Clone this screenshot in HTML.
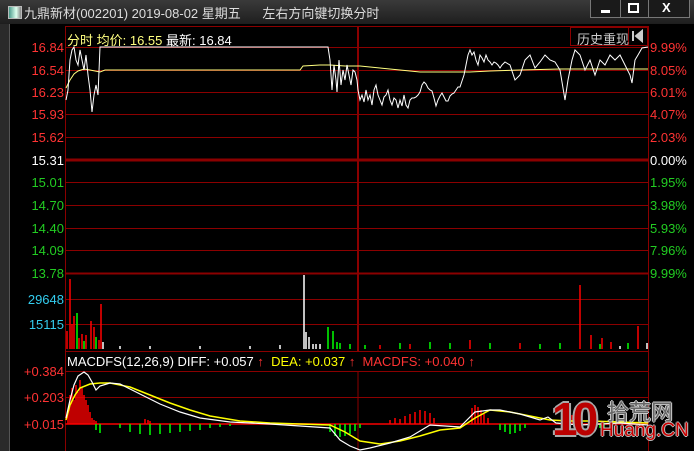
<!DOCTYPE html>
<html><head><meta charset="utf-8"><style>
html,body{margin:0;padding:0;background:#000;width:694px;height:451px;overflow:hidden;font-family:"Liberation Sans","Noto Sans CJK SC",sans-serif}
.t{position:absolute;font-size:13px;white-space:nowrap}
</style></head><body>
<div style="position:absolute;left:0;top:0;width:694px;height:24px;background:linear-gradient(#3a3a3a,#1e1e1e)"></div>
<div style="position:absolute;left:0;top:24px;width:9px;height:427px;background:#2a2a2a;border-right:1px solid #555"></div>
<div style="position:absolute;left:8px;top:6px;width:12px;height:11px;background:linear-gradient(90deg,#4a9a8a,#dfe 60%,#888);border:1px solid #bbb"></div>
<div class="t" style="left:24px;top:3px;color:#ddd;font-size:13px">九鼎新材(002201) 2019-08-02 星期五&nbsp;&nbsp;&nbsp;&nbsp;&nbsp;&nbsp;左右方向键切换分时</div>
<div style="position:absolute;left:590px;top:0;width:98px;height:17px;border:1px solid #777;border-top:0;background:#1a1a1a"></div>
<div style="position:absolute;left:620px;top:0;width:1px;height:17px;background:#777"></div>
<div style="position:absolute;left:648px;top:0;width:1px;height:17px;background:#777"></div>
<div style="position:absolute;left:601px;top:10px;width:9px;height:3px;background:#fff"></div>
<div style="position:absolute;left:628px;top:3px;width:7px;height:6px;border:2px solid #fff"></div>
<div class="t" style="left:662px;top:0px;color:#fff;font-weight:bold;font-size:13px">X</div>
<svg width="694" height="451" style="position:absolute;left:0;top:0">
<g stroke="#8b0000" stroke-width="1">
<rect x="65.5" y="26.5" width="583" height="430" fill="none" stroke="#8b0000"/>
<line x1="65" y1="47.5" x2="648" y2="47.5"/>
<line x1="65" y1="70.5" x2="648" y2="70.5"/>
<line x1="65" y1="92.5" x2="648" y2="92.5"/>
<line x1="65" y1="114.5" x2="648" y2="114.5"/>
<line x1="65" y1="137.5" x2="648" y2="137.5"/>
<line x1="65" y1="160" x2="648" y2="160" stroke-width="3"/>
<line x1="65" y1="182.5" x2="648" y2="182.5"/>
<line x1="65" y1="205.5" x2="648" y2="205.5"/>
<line x1="65" y1="228.5" x2="648" y2="228.5"/>
<line x1="65" y1="250.5" x2="648" y2="250.5"/>
<line x1="65" y1="273.5" x2="648" y2="273.5" stroke-width="2"/>
<line x1="65" y1="299.5" x2="648" y2="299.5"/>
<line x1="65" y1="324.5" x2="648" y2="324.5"/>
<line x1="65" y1="351.5" x2="648" y2="351.5"/>
<line x1="65" y1="371.5" x2="648" y2="371.5"/>
<line x1="65" y1="397.5" x2="648" y2="397.5"/>
<line x1="65" y1="424" x2="648" y2="424" stroke-width="2" stroke="#b00"/>
<line x1="358" y1="26" x2="358" y2="351" stroke-width="2"/>
<line x1="358" y1="371" x2="358" y2="451"/>
</g>
<rect x="570.5" y="27.5" width="58" height="18" fill="#000" stroke="#8b0000"/>
<rect x="628.5" y="27.5" width="19" height="18" fill="#000" stroke="#8b0000"/>
<path d="M633 31v10M642 31l-6 5 6 5z" stroke="#ccc" fill="#ccc" stroke-width="2"/>
<polyline fill="none" stroke="#ffff80" stroke-width="1" points="66,88 70,80 74,74 78,71 84,69 90,70 95,71 100,72 105,70 120,70 200,70 300,70 303,66 320,65 330,65 345,66 360,66 380,68 400,70 420,72 450,72 470,72 490,71 520,70 560,69 600,69 648,69"/>
<polyline fill="none" stroke="#fff" stroke-width="1" points="66,100 68,90 70,60 72,50 74,47 76,60 78,65 80,50 82,60 84,70 86,55 88,75 90,90 92,112 94,95 96,85 98,95 100,47 328,47 330,60 332,90 334,65 336,80 337,92 339,60 341,85 343,70 345,80 347,65 349,75 351,85 353,70 355,72 357,80 358,90 360,100 362,95 364,102 366,90 368,100 370,95 372,105 374,90 376,85 378,95 380,100 382,105 384,97 386,95 388,90 390,100 392,105 394,98 396,100 398,108 400,100 402,106 404,95 406,105 408,108 410,100 412,98 414,98 416,97 418,95 420,92 422,85 424,82 426,84 428,88 430,90 432,91 434,98 436,106 438,100 440,96 442,93 444,97 446,101 448,101 450,96 452,94 454,93 456,90 458,87 460,87 462,81 464,75 466,65 468,55 470,50 472,55 474,52 476,60 478,65 480,55 482,58 484,62 486,55 488,60 490,62 492,65 494,62 496,63 498,65 500,68 502,65 505,62 510,65 515,80 520,75 525,60 530,55 535,68 540,62 545,55 550,60 555,62 560,70 565,100 568,80 572,60 575,50 580,55 585,70 590,60 595,75 600,60 605,65 610,55 615,60 620,55 625,65 630,75 632,83 635,60 638,55 642,48 648,47"/>
<g stroke-width="1.5">
<path stroke="#f00" d="M67 349V331M70 349V279M72 349V324M74 349V316M79 349V338M82 349V334M86 349V335M91 349V321M94 349V327M99 349V340M101 349V304M580 349V285M591 349V335M602 349V338M638 349V326M611 349V342M520 349V343M470 349V340M410 349V344M380 349V345"/>
<path stroke="#0f0" d="M77 349V313M84 349V341M96 349V337M328 349V327M333 349V331M337 349V342M340 349V343M350 349V344M365 349V345M400 349V343M430 349V342M450 349V343M490 349V343M540 349V344M560 349V343M600 349V344M628 349V343"/>
<path stroke="#fff" d="M103 349V342M304 349V275M306 349V332M309 349V337M313 349V344M120 349V346M150 349V346M200 349V346M250 349V346M280 349V345M320 349V344M316 349V344M620 349V346M647 349V343"/>
</g>
<g stroke-width="1.5">
<path stroke="#f00" d="M68 424V410M70 424V395M72 424V388M74 424V400M76 424V385M78 424V392M80 424V380M82 424V388M84 424V395M86 424V400M88 424V405M90 424V412M92 424V418M94 424V420M96 424V421M145 424V419M148 424V420M150 424V421M390 424V420M395 424V418M400 424V419M405 424V416M410 424V414M415 424V412M420 424V410M425 424V411M430 424V413M434 424V418M472 424V408M475 424V405M478 424V407M481 424V410M484 424V414M488 424V418M568 424V418M572 424V415M576 424V420M580 424V422"/>
<path stroke="#0f0" d="M96 424V430M100 424V433M120 424V428M130 424V432M140 424V434M150 424V435M160 424V434M170 424V433M180 424V432M190 424V431M200 424V430M210 424V428M220 424V427M230 424V426M330 424V432M335 424V436M340 424V437M345 424V436M350 424V434M355 424V431M360 424V428M500 424V430M505 424V432M510 424V434M515 424V433M520 424V431M525 424V428M600 424V428M604 424V429"/>
</g>
<polyline fill="none" stroke="#ff0" stroke-width="1.5" points="66,420 70,405 75,395 80,388 90,384 100,383 110,383 130,387 150,395 170,403 190,410 210,416 240,421 270,423 300,424 330,425 345,432 360,441 380,444 400,441 420,436 440,430 460,428 475,418 490,410 510,412 530,416 550,420 570,421 590,421 620,422 648,423"/>
<polyline fill="none" stroke="#fff" stroke-width="1.2" points="66,418 70,400 74,385 78,376 84,372 88,375 92,382 96,390 100,386 110,383 120,384 140,394 160,404 180,412 200,418 230,422 270,424 330,428 340,440 350,446 360,450 370,448 390,443 410,437 430,425 460,427 475,412 490,410 500,410 520,414 540,420 548,417 556,423 580,425 620,423 648,425"/>
</svg>
<div class="t" style="left:67px;top:30px;color:#ffff80">分时 均价: <span style="color:#ffff80">16.55</span> <span style="color:#fff">最新: 16.84</span></div>
<div class="t" style="left:577px;top:29px;color:#ccc">历史重现</div>
<div class="t" style="left:0;top:40px;width:64px;text-align:right;color:#f33">16.84</div>
<div class="t" style="left:0;top:63px;width:64px;text-align:right;color:#f33">16.54</div>
<div class="t" style="left:0;top:85px;width:64px;text-align:right;color:#f33">16.23</div>
<div class="t" style="left:0;top:107px;width:64px;text-align:right;color:#f33">15.93</div>
<div class="t" style="left:0;top:130px;width:64px;text-align:right;color:#f33">15.62</div>
<div class="t" style="left:0;top:153px;width:64px;text-align:right;color:#fff">15.31</div>
<div class="t" style="left:0;top:175px;width:64px;text-align:right;color:#2c2">15.01</div>
<div class="t" style="left:0;top:198px;width:64px;text-align:right;color:#2c2">14.70</div>
<div class="t" style="left:0;top:221px;width:64px;text-align:right;color:#2c2">14.40</div>
<div class="t" style="left:0;top:243px;width:64px;text-align:right;color:#2c2">14.09</div>
<div class="t" style="left:0;top:266px;width:64px;text-align:right;color:#2c2">13.78</div>
<div class="t" style="left:0;top:292px;width:64px;text-align:right;color:#3ce">29648</div>
<div class="t" style="left:0;top:317px;width:64px;text-align:right;color:#3ce">15115</div>
<div class="t" style="left:0;top:364px;width:64px;text-align:right;color:#f33">+0.384</div>
<div class="t" style="left:0;top:390px;width:64px;text-align:right;color:#f33">+0.203</div>
<div class="t" style="left:0;top:417px;width:64px;text-align:right;color:#f33">+0.015</div>
<div class="t" style="left:650px;top:40px;color:#f33">9.99%</div>
<div class="t" style="left:650px;top:63px;color:#f33">8.05%</div>
<div class="t" style="left:650px;top:85px;color:#f33">6.01%</div>
<div class="t" style="left:650px;top:107px;color:#f33">4.07%</div>
<div class="t" style="left:650px;top:130px;color:#f33">2.03%</div>
<div class="t" style="left:650px;top:153px;color:#fff">0.00%</div>
<div class="t" style="left:650px;top:175px;color:#2c2">1.95%</div>
<div class="t" style="left:650px;top:198px;color:#2c2">3.98%</div>
<div class="t" style="left:650px;top:221px;color:#2c2">5.93%</div>
<div class="t" style="left:650px;top:243px;color:#2c2">7.96%</div>
<div class="t" style="left:650px;top:266px;color:#2c2">9.99%</div>
<div class="t" style="left:67px;top:354px;color:#fff">MACDFS(12,26,9) DIFF: +0.057 <span style="color:#f33">↑</span> <span style="color:#ff0">&nbsp;DEA: +0.037 </span><span style="color:#f33">↑&nbsp; MACDFS: +0.040 ↑</span></div>
<div class="t" style="left:552px;top:392px;font-size:46px;font-weight:bold;color:#b00;letter-spacing:-5px;text-shadow:2px 0 #aaa,-2px 0 #aaa,0 2px #aaa,0 -2px #aaa">10</div>
<div class="t" style="left:607px;top:395px;font-size:22px;color:#666;text-shadow:1px 0 #ccc,-1px 0 #ccc,0 1px #ccc,0 -1px #ccc">拾荒网</div>
<div class="t" style="left:600px;top:420px;font-size:19px;color:#c00;text-shadow:1px 0 #bbb,-1px 0 #bbb,0 1px #bbb,0 -1px #bbb">Huang.CN</div>
</body></html>
